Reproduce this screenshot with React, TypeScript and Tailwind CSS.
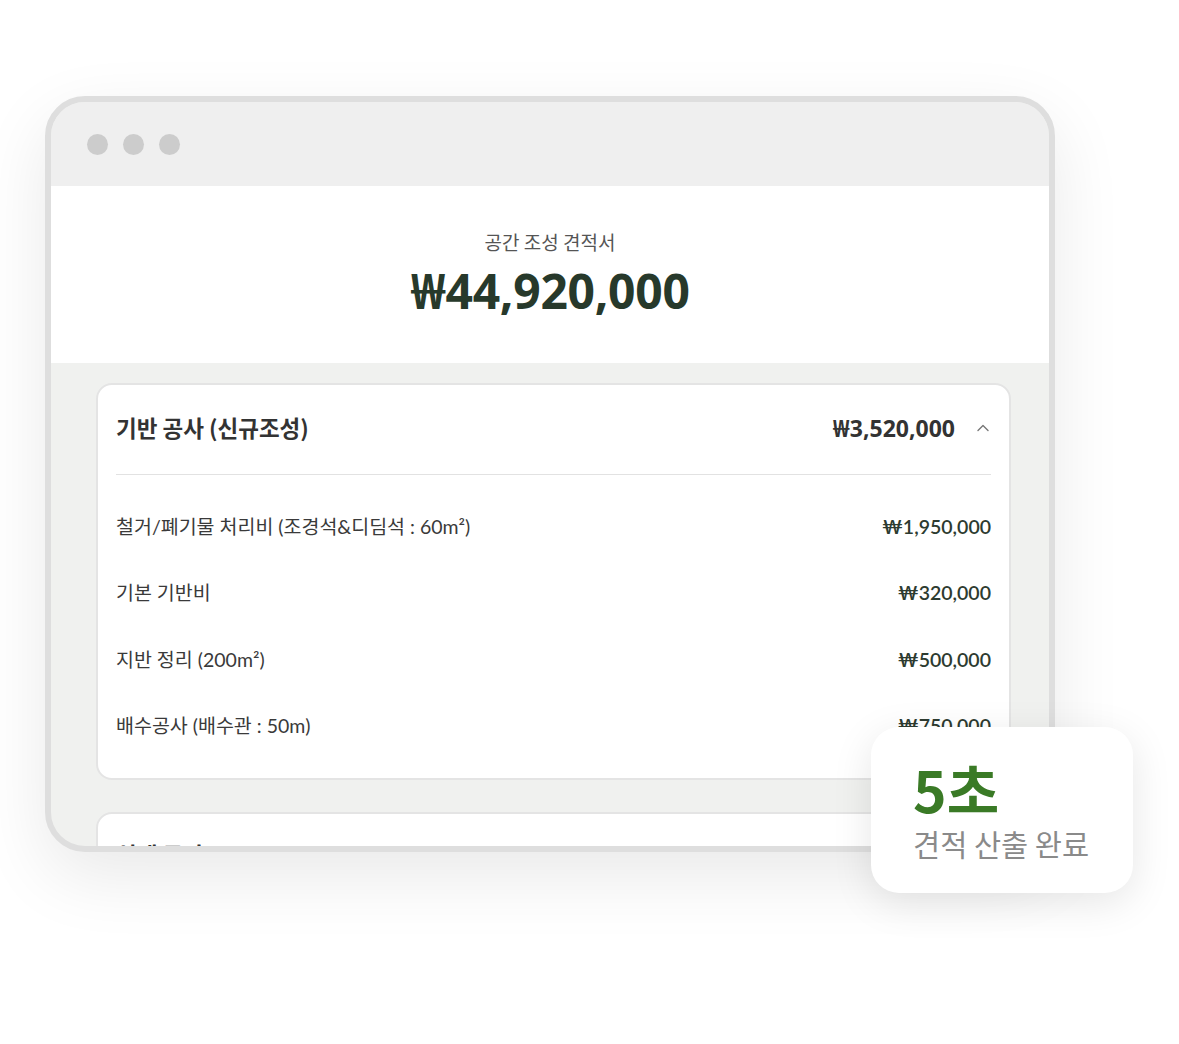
import React from 'react';

const rows = [
  { label: '철거/폐기물 처리비 (조경석&디딤석 : 60m²)', price: '₩1,950,000' },
  { label: '기본 기반비', price: '₩320,000' },
  { label: '지반 정리 (200m²)', price: '₩500,000' },
  { label: '배수공사 (배수관 : 50m)', price: '₩750,000' },
];

const kr = { fontFamily: '"Noto Sans CJK KR", "Noto Sans", sans-serif' };
const lato = { fontFamily: 'Lato, "Noto Sans CJK KR", sans-serif' };

export default function App() {
  return (
    <div className="relative w-[1179px] h-[1044px] bg-white overflow-hidden" style={kr}>
      <div className="pt-[96px] pl-[45px]">
        {/* window */}
        <div className="w-[1010px] h-[756px] rounded-[40px] border-[6px] border-[#dedede] bg-[#f0f1ef] overflow-hidden shadow-[0_24px_70px_rgba(0,0,0,0.09)] flex flex-col">
          <div className="h-[84px] shrink-0 bg-[#efefef] flex items-center gap-[15px] pl-[36px]">
            <span className="w-[21px] h-[21px] rounded-full bg-[#cccccc]" />
            <span className="w-[21px] h-[21px] rounded-full bg-[#cccccc]" />
            <span className="w-[21px] h-[21px] rounded-full bg-[#cccccc]" />
          </div>
          <div className="h-[177px] shrink-0 bg-white flex flex-col items-center pt-[42px]">
            <div className="text-[19px] leading-[28px] text-[#555555]">공간 조성 견적서</div>
            <div className="mt-[8px] text-[48px] leading-[54px] font-bold text-[#27392b] tracking-[-0.3px]" style={{ fontFamily: '"Noto Sans", "Noto Sans CJK KR", sans-serif' }}>
              ₩44,920,000
            </div>
          </div>
          <div className="flex-1 pt-[20px] pl-[45px] pr-[38px] flex flex-col gap-[32px]">
            <div className="bg-white rounded-[16px] border-2 border-[#e4e4e4] shrink-0">
              <div className="mx-[18px] h-[90px] pb-[3px] border-b border-[#e2e2e2] flex items-center justify-between">
                <span className="text-[22.5px] font-bold text-[#333333]">기반 공사 (신규조성)</span>
                <div className="flex items-center gap-[20px]">
                  <span className="text-[23px] font-bold text-[#333333]" style={{ fontFamily: '"Noto Sans", sans-serif' }}>₩3,520,000</span>
                  <svg width="16" height="16" viewBox="0 0 16 16" fill="none" stroke="#777" strokeWidth="1.4" strokeLinecap="round" strokeLinejoin="round">
                    <path d="M3 10.5L8 5.5L13 10.5" />
                  </svg>
                </div>
              </div>
              <div className="mx-[18px] pt-[18px] pb-[19px]">
                {rows.map((r) => (
                  <div key={r.label} className="h-[66.5px] flex items-center justify-between">
                    <span className="text-[19.5px] text-[#3a3a3a]" style={lato}>{r.label}</span>
                    <span className="text-[19.5px] font-semibold text-[#2d3b30]" style={lato}>{r.price}</span>
                  </div>
                ))}
              </div>
            </div>
            <div className="bg-white rounded-[16px] border-2 border-[#e4e4e4] h-[120px] shrink-0 px-[18px] pt-[24px]">
              <span className="text-[22.5px] font-bold text-[#333333]">식재 공사</span>
            </div>
          </div>
        </div>
      </div>

      {/* badge */}
      <div className="absolute left-[871px] top-[727px] w-[262px] h-[166px] bg-white rounded-[28px] shadow-[0_10px_40px_rgba(0,0,0,0.10)] pl-[42px] pt-[28px]">
        <div className="text-[57px] leading-[66px] font-bold text-[#3a7a26]">5초</div>
        <div className="text-[29.5px] leading-[40px] text-[#8a8a8a] mt-[2px]">견적 산출 완료</div>
      </div>
    </div>
  );
}
